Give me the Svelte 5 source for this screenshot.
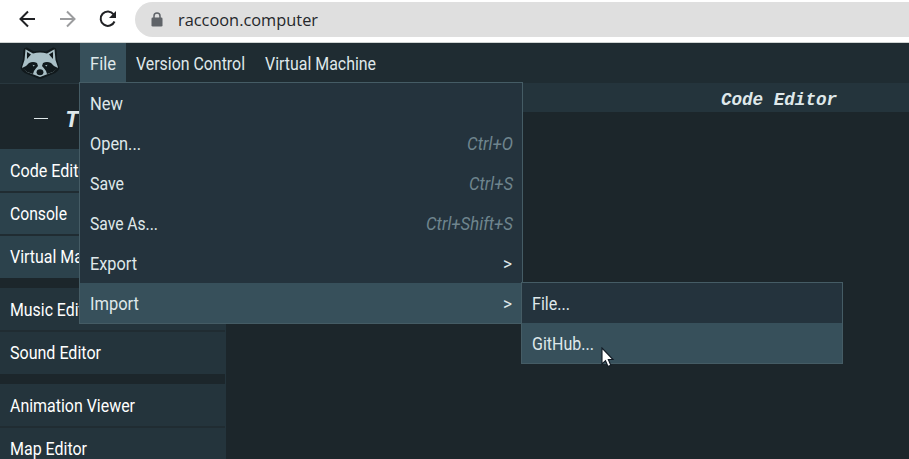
<script>
  const menus = [
    { label: 'File', w: 26, open: true },
    { label: 'Version Control', w: 109 },
    { label: 'Virtual Machine', w: 111 }
  ];
  const fileMenu = [
    { label: 'New', w: 33 },
    { label: 'Open...', w: 51, key: 'Ctrl+O', kw: 46 },
    { label: 'Save', w: 34, key: 'Ctrl+S', kw: 44 },
    { label: 'Save As...', w: 68, key: 'Ctrl+Shift+S', kw: 87 },
    { label: 'Export', w: 47, more: true },
    { label: 'Import', w: 49, more: true, active: true }
  ];
  const importMenu = [
    { label: 'File...', w: 38 },
    { label: 'GitHub...', w: 62, active: true }
  ];
  const groups = [
    [
      { label: 'Code Editor', w: 83, on: true },
      { label: 'Console', w: 57, on: true },
      { label: 'Virtual Machine', w: 111, on: true }
    ],
    [
      { label: 'Music Editor', w: 88 },
      { label: 'Sound Editor', w: 91 }
    ],
    [
      { label: 'Animation Viewer', w: 125 },
      { label: 'Map Editor', w: 77 }
    ]
  ];
</script>

{#snippet text(label, w, cls = '')}
  <svg class="text {cls}" width={w} height="20">
    <text x="0" y="17" textLength={w} lengthAdjust="spacingAndGlyphs">{label}</text>
  </svg>
{/snippet}

<div class="page">
  <header class="browser">
    <svg class="nav" width="135" height="42" viewBox="0 0 135 42" fill="none" stroke-width="2">
      <path d="M35 19H21M28 11.5 20.5 19 28 26.500" stroke="#202124" />
      <path d="M60 19H74M67 11.500 74.500 19 67 26.500" stroke="#9b9c9e" />
      <path d="M113.600 14.300A7.200 7.200 0 1 0 114.500 21.500" stroke="#202124" />
      <path d="M116 11V18H109Z" fill="#202124" />
    </svg>
    <div class="address">
      <svg width="12" height="16" viewBox="0 0 12 16">
        <path d="M3 6V4a3 3 0 0 1 6 0v2" fill="none" stroke="#5f6368" stroke-width="1.500" />
        <rect x="0.500" y="5.500" width="11" height="9" rx="1.300" fill="#5f6368" />
      </svg>
      {@render text('raccoon.computer', 140, 'url')}
    </div>
  </header>

  <nav class="menubar">
    <div class="logo">
      <svg width="40" height="34" viewBox="0 0 40 34">
        <path d="M3.500 4Q4 1 7 1.500L14 5.500Q20 4 26 5.500L33 1.500Q36 1 36.500 4L37 13 39.500 22Q38 26 33 28L22 32.500Q20 33 18 32.500L7 28Q2 26 0.500 22L3 13Z" fill="#11191c" />
        <path d="M5.500 3.300 13 7.500Q20 5.500 27 7.500L34.500 3.300 35.500 14 38 21.500 33 26 20 31 7 26 2 21.500 4.500 14Z" fill="#a9bfc5" />
        <path d="M7 6 11 8.500 7 13ZM33 6 29 8.500 33 13Z" fill="#11191c" />
        <path d="M9 17Q13 15 17 17L18 20Q16 22 14 25L13 28 7 26 2 22 6 20ZM31 17Q27 15 23 17L22 20Q24 22 26 25L27 28 33 26 38 22 34 20Z" fill="#11191c" />
        <path d="M12.500 18.800 15 19.500 13.500 20.500ZM27.500 18.800 25 19.500 26.500 20.500Z" fill="#a9bfc5" />
        <ellipse cx="20" cy="26.300" rx="3.400" ry="3" fill="#11191c" />
      </svg>
    </div>
    {#each menus as m}
      <div class="menu" class:open={m.open}>{@render text(m.label, m.w)}</div>
    {/each}
  </nav>

  <div class="workspace">
    <aside>
      <div class="title"><i></i><span>T</span></div>
      {#each groups as group}
        <div class="group">
          {#each group as item}
            <div class="tool" class:on={item.on}>{@render text(item.label, item.w)}</div>
          {/each}
        </div>
      {/each}
    </aside>
    <main><h2>Code Editor</h2></main>
  </div>

  <div class="dropdown file">
    {#each fileMenu as item}
      <div class="row" class:active={item.active}>
        {@render text(item.label, item.w)}
        {#if item.key}{@render text(item.key, item.kw, 'key')}{/if}
        {#if item.more}
          <span class="more">{@render text('>', 9)}</span>
        {/if}
      </div>
    {/each}
  </div>
  <div class="dropdown import">
    {#each importMenu as item}
      <div class="row" class:active={item.active}>{@render text(item.label, item.w)}</div>
    {/each}
  </div>

  <svg class="cursor" width="14" height="21" viewBox="0 0 14 21">
    <path d="M1 1V17L4.500 13.700 7 19.500 9.800 18.300 7.300 12.500H12Z" fill="#fff" stroke="#111a24" stroke-width="1.100" />
  </svg>
</div>

<style>
  .page {
    position: relative;
    width: 909px;
    height: 459px;
    overflow: hidden;
    display: flex;
    flex-direction: column;
    background: #1c262b;
    color: #dfe8ea;
    font-family: Roboto, "Liberation Sans", sans-serif;
    font-size: 17.6px;
  }
  .text { display: block; flex: none; overflow: visible; fill: currentColor; }
  .browser {
    flex: none;
    display: flex;
    box-sizing: border-box;
    height: 43px;
    background: #fff;
    border-bottom: 1px solid #cfd4d2;
  }
  .nav { flex: none; }
  .address {
    flex: 1;
    display: flex;
    align-items: center;
    gap: 15px;
    height: 35px;
    margin-top: 2px;
    padding-left: 16px;
    background: #dfdfdf;
    border-radius: 18px 0 0 18px;
  }
  .url {
    margin-top: -1px;
    color: #25272b;
    font-family: "Open Sans", "Noto Sans", sans-serif;
    font-size: 17px;
  }
  .menubar {
    flex: none;
    display: flex;
    height: 40px;
    background: #1f2c32;
  }
  .logo { flex: none; width: 80px; padding: 3px 0 0 20px; box-sizing: border-box; }
  .menu { padding: 10px 10px 0; }
  .menu.open { background: #37505b; }
  .workspace { flex: 1; display: flex; min-height: 0; }
  aside {
    flex: none;
    width: 225px;
    border-right: 1px solid #24343c;
    overflow: hidden;
  }
  .title {
    display: flex;
    align-items: center;
    box-sizing: border-box;
    height: 66px;
    border-top: 1px solid #28373e;
    padding: 9px 0 0 34px;
    gap: 17px;
    font: italic bold 23px "Liberation Mono", monospace;
  }
  .title i { width: 14px; height: 1px; margin-top: -5px; background: #dfe8ea; }
  .group { display: flex; flex-direction: column; gap: 1px; margin-bottom: 10px; background: #202c32; }
  .tool { box-sizing: border-box; height: 42px; padding: 11px 10px; background: #24343c; color: #fff; }
  .tool.on { background: #2c424c; }
  .tool + .tool { padding-top: 10px; border-top: 1px solid #202c32; }
  .tool:last-child { height: 43px; }
  main { flex: 1; }
  h2 {
    margin: 0;
    height: 29px;
    padding-left: 423px;
    box-sizing: border-box;
    white-space: nowrap;
    text-align: center;
    background: #24343c;
    font: italic bold 17.6px/34px "Liberation Mono", "DejaVu Sans Mono", monospace;
  }
  .dropdown { position: absolute; border: 1px solid #455c65; background: #24333d; }
  .file { left: 79px; top: 82px; width: 442px; }
  .import { left: 521px; top: 282px; width: 320px; }
  .row {
    display: flex;
    justify-content: space-between;
    align-items: center;
    height: 40px;
    padding: 0 9px 0 10px;
  }
  .row.active { background: #37505b; }
  .key { color: #6f858e; font-style: italic; }
  .more { padding-right: 1px; }
  .cursor { position: absolute; left: 601px; top: 347px; }
</style>
